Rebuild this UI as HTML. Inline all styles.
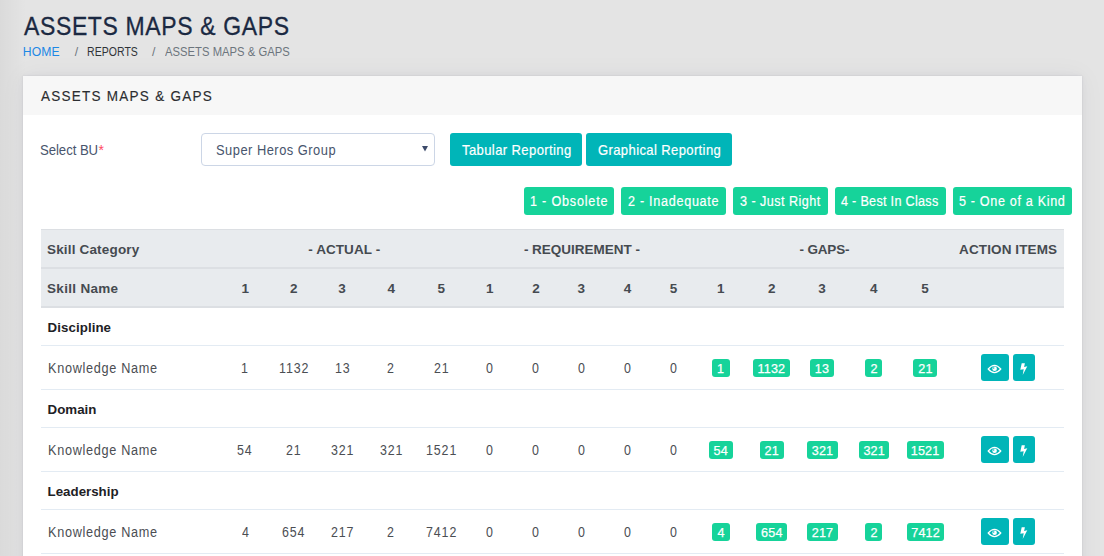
<!DOCTYPE html>
<html><head><meta charset="utf-8"><title>Assets Maps &amp; Gaps</title>
<style>
html,body{margin:0;padding:0;}
body{width:1104px;height:556px;overflow:hidden;position:relative;background:#e4e4e4;font-family:"Liberation Sans", sans-serif;}
.t{position:absolute;white-space:nowrap;}
.b{position:absolute;}
.lshade{position:absolute;left:0;top:0;width:26px;height:556px;background:linear-gradient(to right,rgba(0,0,0,.045),rgba(0,0,0,0));}
</style></head><body>
<div class="lshade"></div>
<div class="b" style="left:23px;top:76px;width:1059px;height:600px;background:#fff;box-shadow:0 0 2px rgba(20,30,60,.09),0 0 8px rgba(20,30,70,.04),0 0 24px rgba(20,30,70,.05);"></div>
<div class="b" style="left:23px;top:76px;width:1059px;height:39px;background:#f7f7f7;"></div>
<div class="b" style="left:201px;top:133px;width:234px;height:33px;box-sizing:border-box;border:1px solid #ccd6e6;border-radius:4px;background:#fff;"></div>
<svg class="b" style="left:422px;top:146px" width="6" height="6" viewBox="0 0 6 6"><path d="M0 0H6L3 5.5Z" fill="#3d4b6b"/></svg>
<div class="b" style="left:450px;top:133px;width:132px;height:33px;background:#00b5b8;border-radius:3px;"></div>
<div class="b" style="left:586px;top:133px;width:146px;height:33px;background:#00b5b8;border-radius:3px;"></div>
<div class="b" style="left:524px;top:187px;width:90px;height:28px;background:#16d39a;border-radius:3px;"></div>
<div class="b" style="left:621px;top:187px;width:105px;height:28px;background:#16d39a;border-radius:3px;"></div>
<div class="b" style="left:733px;top:187px;width:95px;height:28px;background:#16d39a;border-radius:3px;"></div>
<div class="b" style="left:835px;top:187px;width:111px;height:28px;background:#16d39a;border-radius:3px;"></div>
<div class="b" style="left:953px;top:187px;width:119px;height:28px;background:#16d39a;border-radius:3px;"></div>
<div class="b" style="left:41px;top:229px;width:1023px;height:1px;background:#dcdfe3;"></div>
<div class="b" style="left:41px;top:230px;width:1023px;height:76px;background:#e8ebee;"></div>
<div class="b" style="left:41px;top:267px;width:1023px;height:2px;background:#dcdfe3;"></div>
<div class="b" style="left:41px;top:306px;width:1023px;height:2px;background:#dcdfe3;"></div>
<div class="b" style="left:41px;top:345px;width:1023px;height:1px;background:#e3ebf3;"></div>
<div class="b" style="left:41px;top:389px;width:1023px;height:1px;background:#e3ebf3;"></div>
<div class="b" style="left:41px;top:427px;width:1023px;height:1px;background:#e3ebf3;"></div>
<div class="b" style="left:41px;top:471px;width:1023px;height:1px;background:#e3ebf3;"></div>
<div class="b" style="left:41px;top:509px;width:1023px;height:1px;background:#e3ebf3;"></div>
<div class="b" style="left:41px;top:553px;width:1023px;height:1px;background:#e3ebf3;"></div>
<div class="b" style="left:712.4px;top:359px;width:17.2px;height:18px;background:#16d39a;border-radius:3px;"></div>
<div class="b" style="left:752.95px;top:359px;width:37.3px;height:18px;background:#16d39a;border-radius:3px;"></div>
<div class="b" style="left:810.35px;top:359px;width:23.9px;height:18px;background:#16d39a;border-radius:3px;"></div>
<div class="b" style="left:865.3px;top:359px;width:17.2px;height:18px;background:#16d39a;border-radius:3px;"></div>
<div class="b" style="left:913.35px;top:359px;width:23.9px;height:18px;background:#16d39a;border-radius:3px;"></div>
<div class="b" style="left:981px;top:354px;width:28px;height:27px;background:#00b5b8;border-radius:3px;"></div>
<div class="b" style="left:1013px;top:354px;width:22px;height:27px;background:#00b5b8;border-radius:3px;"></div>
<svg class="b" style="left:987px;top:364px" width="15" height="10" viewBox="0 0 15 10"><path d="M1.2 5Q7.5 -2.2 13.8 5Q7.5 12.2 1.2 5Z" fill="none" stroke="#fff" stroke-width="1.15"/><circle cx="7.6" cy="4.8" r="2.3" fill="#fff"/><circle cx="6.7" cy="3.9" r="0.75" fill="#00b5b8"/></svg>
<svg class="b" style="left:1019px;top:363px" width="10" height="12" viewBox="0 0 10 12"><path d="M2.7 0.2H5.9L5.1 3.9L8.3 3.3L3.7 12L4.7 6.3L1.3 6.8Z" fill="#fff"/></svg>
<div class="b" style="left:709.05px;top:441px;width:23.9px;height:18px;background:#16d39a;border-radius:3px;"></div>
<div class="b" style="left:759.65px;top:441px;width:23.9px;height:18px;background:#16d39a;border-radius:3px;"></div>
<div class="b" style="left:807.0px;top:441px;width:30.6px;height:18px;background:#16d39a;border-radius:3px;"></div>
<div class="b" style="left:858.6px;top:441px;width:30.6px;height:18px;background:#16d39a;border-radius:3px;"></div>
<div class="b" style="left:906.65px;top:441px;width:37.3px;height:18px;background:#16d39a;border-radius:3px;"></div>
<div class="b" style="left:981px;top:436px;width:28px;height:27px;background:#00b5b8;border-radius:3px;"></div>
<div class="b" style="left:1013px;top:436px;width:22px;height:27px;background:#00b5b8;border-radius:3px;"></div>
<svg class="b" style="left:987px;top:446px" width="15" height="10" viewBox="0 0 15 10"><path d="M1.2 5Q7.5 -2.2 13.8 5Q7.5 12.2 1.2 5Z" fill="none" stroke="#fff" stroke-width="1.15"/><circle cx="7.6" cy="4.8" r="2.3" fill="#fff"/><circle cx="6.7" cy="3.9" r="0.75" fill="#00b5b8"/></svg>
<svg class="b" style="left:1019px;top:445px" width="10" height="12" viewBox="0 0 10 12"><path d="M2.7 0.2H5.9L5.1 3.9L8.3 3.3L3.7 12L4.7 6.3L1.3 6.8Z" fill="#fff"/></svg>
<div class="b" style="left:712.4px;top:523px;width:17.2px;height:18px;background:#16d39a;border-radius:3px;"></div>
<div class="b" style="left:756.3px;top:523px;width:30.6px;height:18px;background:#16d39a;border-radius:3px;"></div>
<div class="b" style="left:807.0px;top:523px;width:30.6px;height:18px;background:#16d39a;border-radius:3px;"></div>
<div class="b" style="left:865.3px;top:523px;width:17.2px;height:18px;background:#16d39a;border-radius:3px;"></div>
<div class="b" style="left:906.65px;top:523px;width:37.3px;height:18px;background:#16d39a;border-radius:3px;"></div>
<div class="b" style="left:981px;top:518px;width:28px;height:27px;background:#00b5b8;border-radius:3px;"></div>
<div class="b" style="left:1013px;top:518px;width:22px;height:27px;background:#00b5b8;border-radius:3px;"></div>
<svg class="b" style="left:987px;top:528px" width="15" height="10" viewBox="0 0 15 10"><path d="M1.2 5Q7.5 -2.2 13.8 5Q7.5 12.2 1.2 5Z" fill="none" stroke="#fff" stroke-width="1.15"/><circle cx="7.6" cy="4.8" r="2.3" fill="#fff"/><circle cx="6.7" cy="3.9" r="0.75" fill="#00b5b8"/></svg>
<svg class="b" style="left:1019px;top:527px" width="10" height="12" viewBox="0 0 10 12"><path d="M2.7 0.2H5.9L5.1 3.9L8.3 3.3L3.7 12L4.7 6.3L1.3 6.8Z" fill="#fff"/></svg>
<div class="t" style="position:absolute;left:24px;top:14px;font-size:25.5px;line-height:25.5px;color:#1b2942;white-space:nowrap;letter-spacing:0.732px;transform:scaleX(0.9);transform-origin:0 0;-webkit-text-stroke:0.3px currentColor;">ASSETS MAPS &amp; GAPS</div>
<div class="t" style="position:absolute;left:22.8px;top:46px;font-size:12.2px;line-height:12.2px;color:#1e88e5;white-space:nowrap;letter-spacing:0.100px;">HOME</div>
<div class="t" style="position:absolute;left:74.7px;top:46px;font-size:12.2px;line-height:12.2px;color:#6c757d;white-space:nowrap;">/</div>
<div class="t" style="position:absolute;left:86.6px;top:46px;font-size:12.5px;line-height:12.5px;color:#2f3337;white-space:nowrap;letter-spacing:0.060px;transform:scaleX(0.84);transform-origin:0 0;">REPORTS</div>
<div class="t" style="position:absolute;left:152.1px;top:46px;font-size:12.2px;line-height:12.2px;color:#6c757d;white-space:nowrap;">/</div>
<div class="t" style="position:absolute;left:164.7px;top:46px;font-size:12.5px;line-height:12.5px;color:#6c757d;white-space:nowrap;letter-spacing:0.020px;transform:scaleX(0.9);transform-origin:0 0;">ASSETS MAPS &amp; GAPS</div>
<div class="t" style="position:absolute;left:41px;top:88px;font-size:15px;line-height:15px;color:#2b2d30;white-space:nowrap;letter-spacing:1.399px;transform:scaleX(0.9);transform-origin:0 0;-webkit-text-stroke:0.15px currentColor;">ASSETS MAPS &amp; GAPS</div>
<div class="t" style="position:absolute;left:40.3px;top:143px;font-size:14px;line-height:14px;color:#48556d;white-space:nowrap;letter-spacing:-0.053px;transform:scaleX(0.94);transform-origin:0 0;">Select BU</div>
<div class="t" style="position:absolute;left:98.6px;top:143px;font-size:14px;line-height:14px;color:#ff4961;white-space:nowrap;">*</div>
<div class="t" style="position:absolute;left:216px;top:143px;font-size:14px;line-height:14px;color:#48556d;white-space:nowrap;letter-spacing:0.537px;transform:scaleX(0.92);transform-origin:0 0;">Super Heros Group</div>
<div class="t" style="position:absolute;left:461.6px;top:143px;font-size:14.5px;line-height:14.5px;color:#ffffff;white-space:nowrap;letter-spacing:0.431px;transform:scaleX(0.9);transform-origin:0 0;-webkit-text-stroke:0.2px currentColor;">Tabular Reporting</div>
<div class="t" style="position:absolute;left:597.6px;top:143px;font-size:14.5px;line-height:14.5px;color:#ffffff;white-space:nowrap;letter-spacing:0.414px;transform:scaleX(0.9);transform-origin:0 0;-webkit-text-stroke:0.2px currentColor;">Graphical Reporting</div>
<div class="t" style="position:absolute;left:530px;top:194px;font-size:14px;line-height:14px;color:#ffffff;white-space:nowrap;letter-spacing:0.889px;transform:scaleX(0.9);transform-origin:0 0;-webkit-text-stroke:0.2px currentColor;">1 - Obsolete</div>
<div class="t" style="position:absolute;left:628px;top:194px;font-size:14px;line-height:14px;color:#ffffff;white-space:nowrap;letter-spacing:0.795px;transform:scaleX(0.9);transform-origin:0 0;-webkit-text-stroke:0.2px currentColor;">2 - Inadequate</div>
<div class="t" style="position:absolute;left:740px;top:194px;font-size:14px;line-height:14px;color:#ffffff;white-space:nowrap;letter-spacing:0.513px;transform:scaleX(0.9);transform-origin:0 0;-webkit-text-stroke:0.2px currentColor;">3 - Just Right</div>
<div class="t" style="position:absolute;left:841.2px;top:194px;font-size:14px;line-height:14px;color:#ffffff;white-space:nowrap;letter-spacing:0.333px;transform:scaleX(0.9);transform-origin:0 0;-webkit-text-stroke:0.2px currentColor;">4 - Best In Class</div>
<div class="t" style="position:absolute;left:959.1px;top:194px;font-size:14px;line-height:14px;color:#ffffff;white-space:nowrap;letter-spacing:0.736px;transform:scaleX(0.9);transform-origin:0 0;-webkit-text-stroke:0.2px currentColor;">5 - One of a Kind</div>
<div class="t" style="position:absolute;left:47px;top:243px;font-size:13.5px;line-height:13.5px;color:#454a50;white-space:nowrap;font-weight:700;letter-spacing:0.169px;">Skill Category</div>
<div class="t" style="position:absolute;left:308.3px;top:243px;font-size:13.5px;line-height:13.5px;color:#454a50;white-space:nowrap;font-weight:700;letter-spacing:0.067px;">- ACTUAL -</div>
<div class="t" style="position:absolute;left:523.9px;top:243px;font-size:13.5px;line-height:13.5px;color:#454a50;white-space:nowrap;font-weight:700;letter-spacing:-0.007px;">- REQUIREMENT -</div>
<div class="t" style="position:absolute;left:799.6px;top:243px;font-size:13.5px;line-height:13.5px;color:#454a50;white-space:nowrap;font-weight:700;letter-spacing:-0.183px;">- GAPS-</div>
<div class="t" style="position:absolute;left:959.1px;top:243px;font-size:13.5px;line-height:13.5px;color:#454a50;white-space:nowrap;font-weight:700;letter-spacing:0.109px;">ACTION ITEMS</div>
<div class="t" style="position:absolute;left:47px;top:282px;font-size:13.5px;line-height:13.5px;color:#454a50;white-space:nowrap;font-weight:700;letter-spacing:0.311px;">Skill Name</div>
<div class="t" style="position:absolute;left:241.4px;top:282px;font-size:13.5px;line-height:13.5px;color:#454a50;white-space:nowrap;font-weight:700;">1</div>
<div class="t" style="position:absolute;left:290.1px;top:282px;font-size:13.5px;line-height:13.5px;color:#454a50;white-space:nowrap;font-weight:700;">2</div>
<div class="t" style="position:absolute;left:338.3px;top:282px;font-size:13.5px;line-height:13.5px;color:#454a50;white-space:nowrap;font-weight:700;">3</div>
<div class="t" style="position:absolute;left:387.4px;top:282px;font-size:13.5px;line-height:13.5px;color:#454a50;white-space:nowrap;font-weight:700;">4</div>
<div class="t" style="position:absolute;left:437.5px;top:282px;font-size:13.5px;line-height:13.5px;color:#454a50;white-space:nowrap;font-weight:700;">5</div>
<div class="t" style="position:absolute;left:485.9px;top:282px;font-size:13.5px;line-height:13.5px;color:#454a50;white-space:nowrap;font-weight:700;">1</div>
<div class="t" style="position:absolute;left:532.2px;top:282px;font-size:13.5px;line-height:13.5px;color:#454a50;white-space:nowrap;font-weight:700;">2</div>
<div class="t" style="position:absolute;left:577.4px;top:282px;font-size:13.5px;line-height:13.5px;color:#454a50;white-space:nowrap;font-weight:700;">3</div>
<div class="t" style="position:absolute;left:623.8px;top:282px;font-size:13.5px;line-height:13.5px;color:#454a50;white-space:nowrap;font-weight:700;">4</div>
<div class="t" style="position:absolute;left:669.8px;top:282px;font-size:13.5px;line-height:13.5px;color:#454a50;white-space:nowrap;font-weight:700;">5</div>
<div class="t" style="position:absolute;left:717.0px;top:282px;font-size:13.5px;line-height:13.5px;color:#454a50;white-space:nowrap;font-weight:700;">1</div>
<div class="t" style="position:absolute;left:768.1px;top:282px;font-size:13.5px;line-height:13.5px;color:#454a50;white-space:nowrap;font-weight:700;">2</div>
<div class="t" style="position:absolute;left:818.3px;top:282px;font-size:13.5px;line-height:13.5px;color:#454a50;white-space:nowrap;font-weight:700;">3</div>
<div class="t" style="position:absolute;left:869.9px;top:282px;font-size:13.5px;line-height:13.5px;color:#454a50;white-space:nowrap;font-weight:700;">4</div>
<div class="t" style="position:absolute;left:921.3px;top:282px;font-size:13.5px;line-height:13.5px;color:#454a50;white-space:nowrap;font-weight:700;">5</div>
<div class="t" style="position:absolute;left:47.6px;top:321px;font-size:13.3px;line-height:13.3px;color:#1e2125;white-space:nowrap;font-weight:700;letter-spacing:0.067px;">Discipline</div>
<div class="t" style="position:absolute;left:47.6px;top:362px;font-size:13.8px;line-height:13.8px;color:#4b4e53;white-space:nowrap;letter-spacing:0.744px;transform:scaleX(0.92);transform-origin:0 0;">Knowledge Name</div>
<div class="t" style="position:absolute;left:241.4px;top:362px;font-size:13.8px;line-height:13.8px;color:#4b4e53;white-space:nowrap;letter-spacing:1.000px;transform:scaleX(0.9);transform-origin:0 0;">1</div>
<div class="t" style="position:absolute;left:278.6px;top:362px;font-size:13.8px;line-height:13.8px;color:#4b4e53;white-space:nowrap;letter-spacing:1.000px;transform:scaleX(0.9);transform-origin:0 0;">1132</div>
<div class="t" style="position:absolute;left:334.8px;top:362px;font-size:13.8px;line-height:13.8px;color:#4b4e53;white-space:nowrap;letter-spacing:1.000px;transform:scaleX(0.9);transform-origin:0 0;">13</div>
<div class="t" style="position:absolute;left:387.4px;top:362px;font-size:13.8px;line-height:13.8px;color:#4b4e53;white-space:nowrap;letter-spacing:1.000px;transform:scaleX(0.9);transform-origin:0 0;">2</div>
<div class="t" style="position:absolute;left:434.0px;top:362px;font-size:13.8px;line-height:13.8px;color:#4b4e53;white-space:nowrap;letter-spacing:1.000px;transform:scaleX(0.9);transform-origin:0 0;">21</div>
<div class="t" style="position:absolute;left:486.4px;top:362px;font-size:13.8px;line-height:13.8px;color:#4b4e53;white-space:nowrap;transform:scaleX(0.9);transform-origin:0 0;">0</div>
<div class="t" style="position:absolute;left:532.2px;top:362px;font-size:13.8px;line-height:13.8px;color:#4b4e53;white-space:nowrap;transform:scaleX(0.9);transform-origin:0 0;">0</div>
<div class="t" style="position:absolute;left:577.9px;top:362px;font-size:13.8px;line-height:13.8px;color:#4b4e53;white-space:nowrap;transform:scaleX(0.9);transform-origin:0 0;">0</div>
<div class="t" style="position:absolute;left:624.3px;top:362px;font-size:13.8px;line-height:13.8px;color:#4b4e53;white-space:nowrap;transform:scaleX(0.9);transform-origin:0 0;">0</div>
<div class="t" style="position:absolute;left:670.3px;top:362px;font-size:13.8px;line-height:13.8px;color:#4b4e53;white-space:nowrap;transform:scaleX(0.9);transform-origin:0 0;">0</div>
<div class="t" style="position:absolute;left:717.0px;top:363px;font-size:12.6px;line-height:12.6px;color:#ffffff;white-space:nowrap;-webkit-text-stroke:0.25px currentColor;letter-spacing:0.15px;">1</div>
<div class="t" style="position:absolute;left:757.6px;top:363px;font-size:12.6px;line-height:12.6px;color:#ffffff;white-space:nowrap;-webkit-text-stroke:0.25px currentColor;letter-spacing:0.15px;">1132</div>
<div class="t" style="position:absolute;left:814.8px;top:363px;font-size:12.6px;line-height:12.6px;color:#ffffff;white-space:nowrap;-webkit-text-stroke:0.25px currentColor;letter-spacing:0.15px;">13</div>
<div class="t" style="position:absolute;left:870.4px;top:363px;font-size:12.6px;line-height:12.6px;color:#ffffff;white-space:nowrap;-webkit-text-stroke:0.25px currentColor;letter-spacing:0.15px;">2</div>
<div class="t" style="position:absolute;left:918.3px;top:363px;font-size:12.6px;line-height:12.6px;color:#ffffff;white-space:nowrap;-webkit-text-stroke:0.25px currentColor;letter-spacing:0.15px;">21</div>
<div class="t" style="position:absolute;left:47.6px;top:403px;font-size:13.3px;line-height:13.3px;color:#1e2125;white-space:nowrap;font-weight:700;">Domain</div>
<div class="t" style="position:absolute;left:47.6px;top:444px;font-size:13.8px;line-height:13.8px;color:#4b4e53;white-space:nowrap;letter-spacing:0.744px;transform:scaleX(0.92);transform-origin:0 0;">Knowledge Name</div>
<div class="t" style="position:absolute;left:237.4px;top:444px;font-size:13.8px;line-height:13.8px;color:#4b4e53;white-space:nowrap;letter-spacing:1.000px;transform:scaleX(0.9);transform-origin:0 0;">54</div>
<div class="t" style="position:absolute;left:286.1px;top:444px;font-size:13.8px;line-height:13.8px;color:#4b4e53;white-space:nowrap;letter-spacing:1.000px;transform:scaleX(0.9);transform-origin:0 0;">21</div>
<div class="t" style="position:absolute;left:330.8px;top:444px;font-size:13.8px;line-height:13.8px;color:#4b4e53;white-space:nowrap;letter-spacing:1.000px;transform:scaleX(0.9);transform-origin:0 0;">321</div>
<div class="t" style="position:absolute;left:379.9px;top:444px;font-size:13.8px;line-height:13.8px;color:#4b4e53;white-space:nowrap;letter-spacing:1.000px;transform:scaleX(0.9);transform-origin:0 0;">321</div>
<div class="t" style="position:absolute;left:426.0px;top:444px;font-size:13.8px;line-height:13.8px;color:#4b4e53;white-space:nowrap;letter-spacing:1.000px;transform:scaleX(0.9);transform-origin:0 0;">1521</div>
<div class="t" style="position:absolute;left:486.4px;top:444px;font-size:13.8px;line-height:13.8px;color:#4b4e53;white-space:nowrap;transform:scaleX(0.9);transform-origin:0 0;">0</div>
<div class="t" style="position:absolute;left:532.2px;top:444px;font-size:13.8px;line-height:13.8px;color:#4b4e53;white-space:nowrap;transform:scaleX(0.9);transform-origin:0 0;">0</div>
<div class="t" style="position:absolute;left:577.9px;top:444px;font-size:13.8px;line-height:13.8px;color:#4b4e53;white-space:nowrap;transform:scaleX(0.9);transform-origin:0 0;">0</div>
<div class="t" style="position:absolute;left:624.3px;top:444px;font-size:13.8px;line-height:13.8px;color:#4b4e53;white-space:nowrap;transform:scaleX(0.9);transform-origin:0 0;">0</div>
<div class="t" style="position:absolute;left:670.3px;top:444px;font-size:13.8px;line-height:13.8px;color:#4b4e53;white-space:nowrap;transform:scaleX(0.9);transform-origin:0 0;">0</div>
<div class="t" style="position:absolute;left:713.5px;top:445px;font-size:12.6px;line-height:12.6px;color:#ffffff;white-space:nowrap;-webkit-text-stroke:0.25px currentColor;letter-spacing:0.15px;">54</div>
<div class="t" style="position:absolute;left:764.6px;top:445px;font-size:12.6px;line-height:12.6px;color:#ffffff;white-space:nowrap;-webkit-text-stroke:0.25px currentColor;letter-spacing:0.15px;">21</div>
<div class="t" style="position:absolute;left:811.8px;top:445px;font-size:12.6px;line-height:12.6px;color:#ffffff;white-space:nowrap;-webkit-text-stroke:0.25px currentColor;letter-spacing:0.15px;">321</div>
<div class="t" style="position:absolute;left:863.4px;top:445px;font-size:12.6px;line-height:12.6px;color:#ffffff;white-space:nowrap;-webkit-text-stroke:0.25px currentColor;letter-spacing:0.15px;">321</div>
<div class="t" style="position:absolute;left:910.8px;top:445px;font-size:12.6px;line-height:12.6px;color:#ffffff;white-space:nowrap;-webkit-text-stroke:0.25px currentColor;letter-spacing:0.15px;">1521</div>
<div class="t" style="position:absolute;left:47.6px;top:485px;font-size:13.3px;line-height:13.3px;color:#1e2125;white-space:nowrap;font-weight:700;">Leadership</div>
<div class="t" style="position:absolute;left:47.6px;top:526px;font-size:13.8px;line-height:13.8px;color:#4b4e53;white-space:nowrap;letter-spacing:0.744px;transform:scaleX(0.92);transform-origin:0 0;">Knowledge Name</div>
<div class="t" style="position:absolute;left:241.9px;top:526px;font-size:13.8px;line-height:13.8px;color:#4b4e53;white-space:nowrap;letter-spacing:1.000px;transform:scaleX(0.9);transform-origin:0 0;">4</div>
<div class="t" style="position:absolute;left:282.1px;top:526px;font-size:13.8px;line-height:13.8px;color:#4b4e53;white-space:nowrap;letter-spacing:1.000px;transform:scaleX(0.9);transform-origin:0 0;">654</div>
<div class="t" style="position:absolute;left:330.8px;top:526px;font-size:13.8px;line-height:13.8px;color:#4b4e53;white-space:nowrap;letter-spacing:1.000px;transform:scaleX(0.9);transform-origin:0 0;">217</div>
<div class="t" style="position:absolute;left:387.4px;top:526px;font-size:13.8px;line-height:13.8px;color:#4b4e53;white-space:nowrap;letter-spacing:1.000px;transform:scaleX(0.9);transform-origin:0 0;">2</div>
<div class="t" style="position:absolute;left:426.0px;top:526px;font-size:13.8px;line-height:13.8px;color:#4b4e53;white-space:nowrap;letter-spacing:1.000px;transform:scaleX(0.9);transform-origin:0 0;">7412</div>
<div class="t" style="position:absolute;left:486.4px;top:526px;font-size:13.8px;line-height:13.8px;color:#4b4e53;white-space:nowrap;transform:scaleX(0.9);transform-origin:0 0;">0</div>
<div class="t" style="position:absolute;left:532.2px;top:526px;font-size:13.8px;line-height:13.8px;color:#4b4e53;white-space:nowrap;transform:scaleX(0.9);transform-origin:0 0;">0</div>
<div class="t" style="position:absolute;left:577.9px;top:526px;font-size:13.8px;line-height:13.8px;color:#4b4e53;white-space:nowrap;transform:scaleX(0.9);transform-origin:0 0;">0</div>
<div class="t" style="position:absolute;left:624.3px;top:526px;font-size:13.8px;line-height:13.8px;color:#4b4e53;white-space:nowrap;transform:scaleX(0.9);transform-origin:0 0;">0</div>
<div class="t" style="position:absolute;left:670.3px;top:526px;font-size:13.8px;line-height:13.8px;color:#4b4e53;white-space:nowrap;transform:scaleX(0.9);transform-origin:0 0;">0</div>
<div class="t" style="position:absolute;left:717.5px;top:527px;font-size:12.6px;line-height:12.6px;color:#ffffff;white-space:nowrap;-webkit-text-stroke:0.25px currentColor;letter-spacing:0.15px;">4</div>
<div class="t" style="position:absolute;left:761.1px;top:527px;font-size:12.6px;line-height:12.6px;color:#ffffff;white-space:nowrap;-webkit-text-stroke:0.25px currentColor;letter-spacing:0.15px;">654</div>
<div class="t" style="position:absolute;left:811.8px;top:527px;font-size:12.6px;line-height:12.6px;color:#ffffff;white-space:nowrap;-webkit-text-stroke:0.25px currentColor;letter-spacing:0.15px;">217</div>
<div class="t" style="position:absolute;left:870.4px;top:527px;font-size:12.6px;line-height:12.6px;color:#ffffff;white-space:nowrap;-webkit-text-stroke:0.25px currentColor;letter-spacing:0.15px;">2</div>
<div class="t" style="position:absolute;left:911.3px;top:527px;font-size:12.6px;line-height:12.6px;color:#ffffff;white-space:nowrap;-webkit-text-stroke:0.25px currentColor;letter-spacing:0.15px;">7412</div>
</body></html>
